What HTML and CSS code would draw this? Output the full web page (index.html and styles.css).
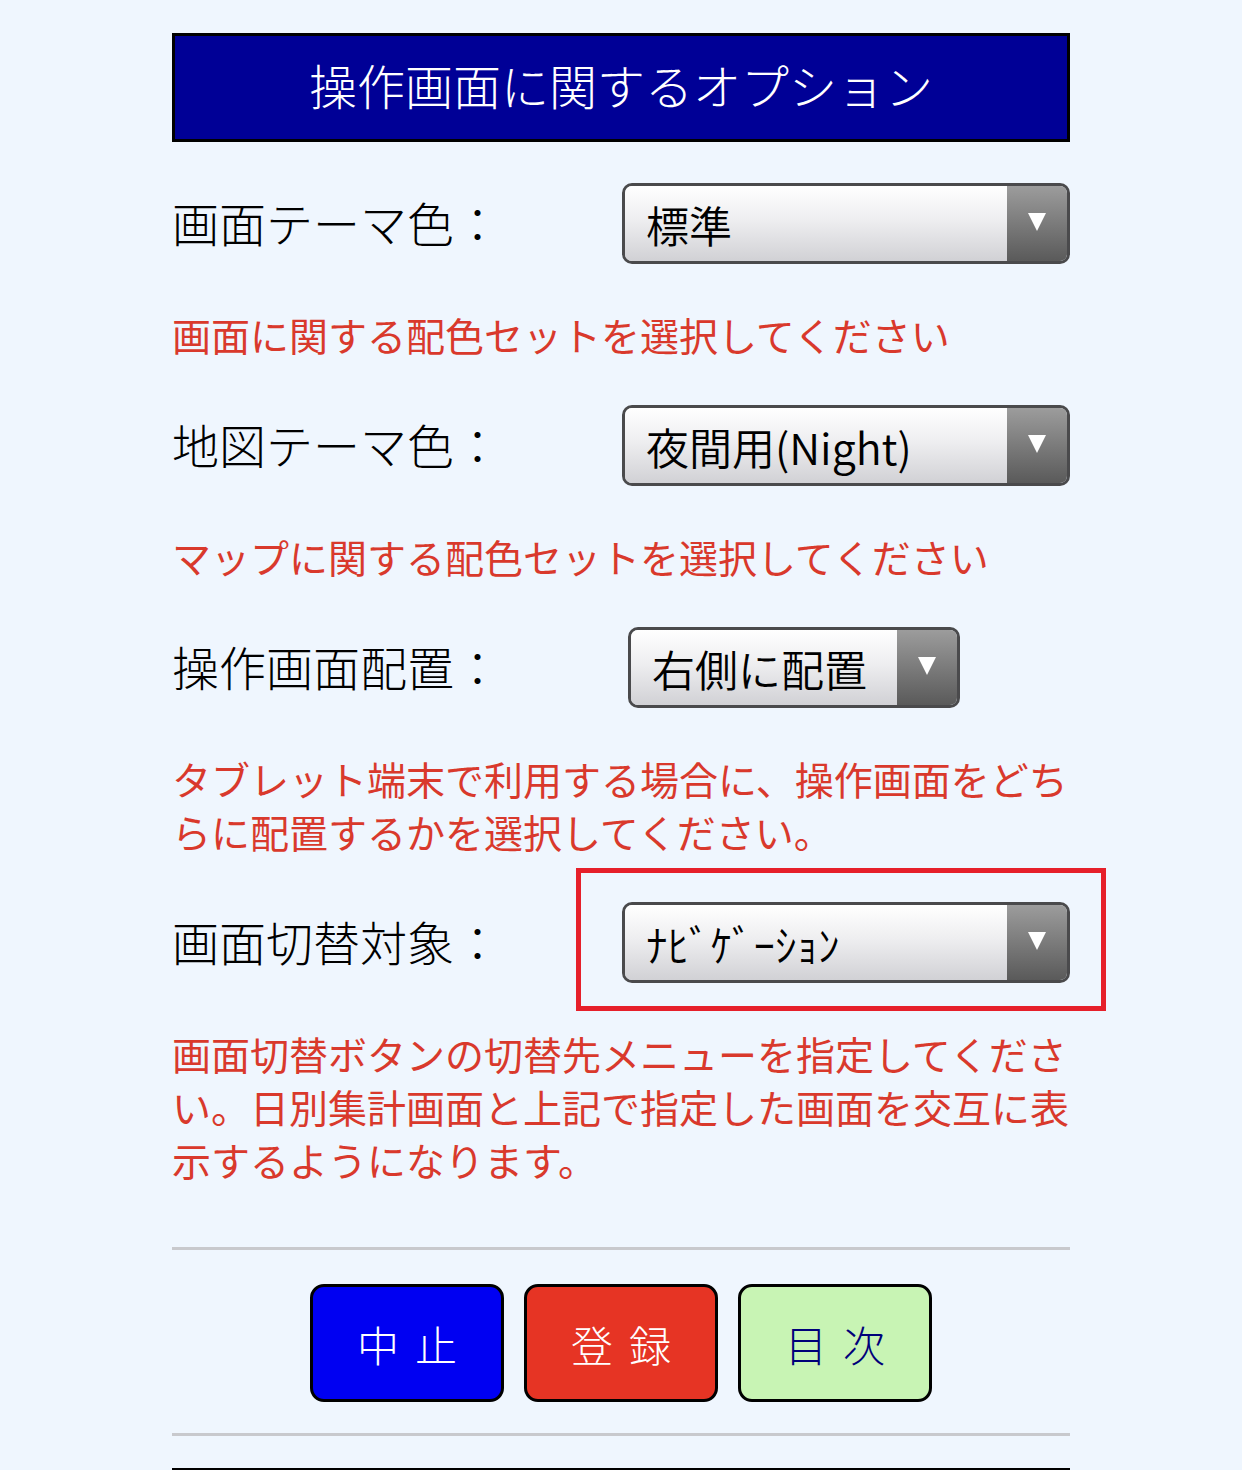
FILE: index.html
```html
<!DOCTYPE html>
<html lang="ja">
<head>
  <meta charset="UTF-8" />
  <meta name="viewport" content="width=device-width, initial-scale=1.0" />
  <title>操作画面に関するオプション</title>
  <link rel="stylesheet" href="styles.css">
</head>
<body>
  <div class="page">
    <h1 class="title">操作画面に関するオプション</h1>

    <div class="option-row">
      <span class="option-label">画面テーマ色：</span>
      <div class="picker">
        <span class="picker-value">標準</span>
        <span class="picker-arrow"></span>
      </div>
    </div>
    <p class="option-note">画面に関する配色セットを選択してください</p>

    <div class="option-row">
      <span class="option-label">地図テーマ色：</span>
      <div class="picker">
        <span class="picker-value">夜間用(Night)</span>
        <span class="picker-arrow"></span>
      </div>
    </div>
    <p class="option-note">マップに関する配色セットを選択してください</p>

    <div class="option-row">
      <span class="option-label">操作画面配置：</span>
      <div class="picker picker-auto">
        <span class="picker-value">右側に配置</span>
        <span class="picker-arrow"></span>
      </div>
    </div>
    <p class="option-note">タブレット端末で利用する場合に、操作画面をどちらに配置するかを選択してください。</p>

    <div class="option-row marked">
      <span class="option-label">画面切替対象：</span>
      <div class="picker">
        <span class="picker-value">ﾅﾋﾞｹﾞｰｼｮﾝ</span>
        <span class="picker-arrow"></span>
      </div>
      <div class="mark-box"></div>
    </div>
    <p class="option-note">画面切替ボタンの切替先メニューを指定してください。日別集計画面と上記で指定した画面を交互に表示するようになります。</p>

    <div class="actions">
      <button class="action-btn btn-cancel">中止</button>
      <button class="action-btn btn-save">登録</button>
      <button class="action-btn btn-index">目次</button>
    </div>
    <div class="footer-line"></div>
  </div>
</body>
</html>
```

FILE: styles.css
```css
body {
  margin: 0;
  padding-top: 33px;
  background: #eff6fe;
  font-family: "Noto Sans CJK JP", "Noto Sans", sans-serif;
  color: #000;
}

.page {
  width: 898px;
  margin: 0 auto;
}

.title {
  box-sizing: border-box;
  height: 109px;
  margin: 0 0 41px;
  padding-bottom: 8px;
  border: 3px solid #000;
  background: #000096;
  color: #fff;
  font-size: 48px;
  font-weight: 300;
  display: flex;
  justify-content: center;
  align-items: center;
}

.option-row {
  display: flex;
  align-items: center;
  height: 81px;
}

.option-label {
  width: 450px;
  flex-shrink: 0;
  font-size: 47px;
  font-weight: 300;
  line-height: 1;
  padding-bottom: 4px;
}

.picker {
  box-sizing: border-box;
  flex: 1;
  height: 81px;
  display: flex;
  border: 3px solid #4a4a4c;
  border-radius: 10px;
  overflow: hidden;
}

.picker-auto {
  flex: 0 0 auto;
  margin-left: 6px;
}

.picker-value {
  flex: 1;
  display: flex;
  align-items: center;
  padding: 0 30px 0 21px;
  font-size: 43px;
  font-weight: 350;
  background: linear-gradient(#ffffff, #eeeef0 45%, #d1d1d5);
  white-space: nowrap;
}

.picker-arrow {
  width: 60px;
  flex-shrink: 0;
  display: flex;
  justify-content: center;
  align-items: center;
  padding-bottom: 4px;
  box-sizing: border-box;
  background: linear-gradient(#9c9c9c, #5a5a5a);
}

.picker-arrow::after {
  content: "";
  border-left: 9px solid transparent;
  border-right: 9px solid transparent;
  border-top: 18px solid #fff;
}

.option-note {
  margin: 44px 0;
  color: #d9392c;
  font-size: 39px;
  line-height: 53px;
}

.marked {
  position: relative;
}

.mark-box {
  position: absolute;
  left: 404px;
  top: -34px;
  width: 530px;
  height: 143px;
  box-sizing: border-box;
  border: 5px solid #e61f2a;
}

.actions {
  margin-top: 61px;
  padding: 34px 0 31px;
  border-top: 3px solid #c8c9cd;
  border-bottom: 3px solid #c8c9cd;
  display: flex;
  justify-content: center;
  gap: 20px;
}

.action-btn {
  width: 194px;
  height: 118px;
  border: 3px solid #000;
  border-radius: 14px;
  font-family: "Noto Sans CJK JP", sans-serif;
  font-size: 42px;
  font-weight: 300;
  letter-spacing: 16px;
  padding: 0 0 0 16px;
  color: #fff;
}

.btn-cancel {
  background: #0000f2;
}

.btn-save {
  background: #e63424;
}

.btn-index {
  background: #c8f4b4;
  color: #00007a;
}

.footer-line {
  margin-top: 32px;
  border-top: 2px solid #000;
}
```
